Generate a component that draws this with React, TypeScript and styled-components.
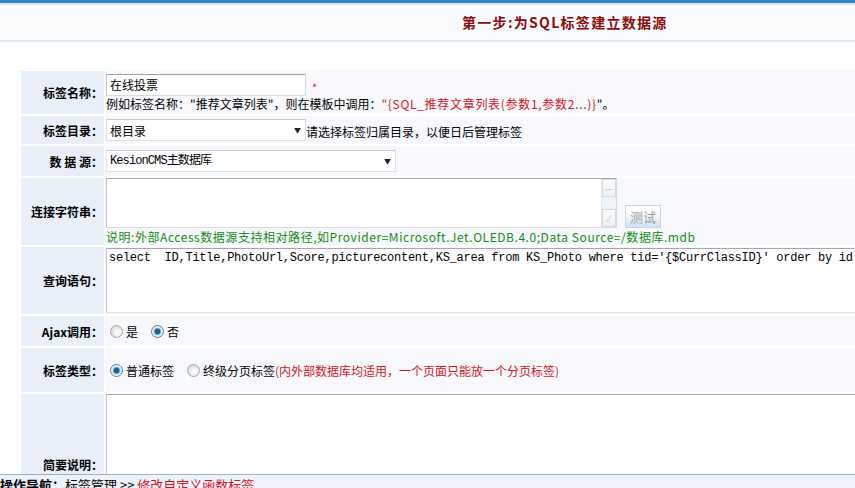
import React from 'react';
import styled, { createGlobalStyle } from 'styled-components';

const GlobalStyle = createGlobalStyle`
  html, body {
    margin: 0;
    padding: 0;
    background: #fff;
    overflow: hidden;
  }
  body {
    font-family: "Noto Sans CJK SC", "Liberation Sans", sans-serif;
    font-size: 12px;
    color: #000;
  }
`;

const Header = styled.div`
  height: 37px;
  border-top: 3px solid #2f84c8;
  box-shadow: inset 0 2px 0 #d4eaf8;
  background: #fafcfe;
  border-bottom: 2px solid #dfe7ef;
  display: flex;
  align-items: center;
  padding-left: 462px;
`;

const Title = styled.h1`
  margin: 0;
  font-size: 14px;
  font-weight: bold;
  letter-spacing: 1.3px;
  color: #8c0a0a;
`;

const Form = styled.div`
  margin: 29px 0 0 21px;
  width: 1100px;
  display: flex;
  flex-direction: column;
  gap: 2px;
`;

const Row = styled.div<{ $h: number }>`
  display: grid;
  grid-template-columns: 83px 1fr;
  column-gap: 1px;
  height: ${({ $h }) => $h}px;
`;

const Label = styled.div`
  background: #e8eff9;
  display: flex;
  align-items: center;
  justify-content: flex-end;
  font-weight: bold;
  font-size: 12px;
  padding-right: 1px;
  white-space: nowrap;
`;

const Cell = styled.div<{ $dir?: 'row' | 'column'; $top?: boolean }>`
  background: #f7f9fd;
  display: flex;
  flex-direction: ${({ $dir }) => $dir || 'column'};
  justify-content: ${({ $dir, $top }) => ($dir === 'row' || $top ? 'flex-start' : 'center')};
  align-items: ${({ $dir }) => ($dir === 'row' ? 'center' : 'flex-start')};
  padding-left: 1px;
  white-space: nowrap;
`;

const Line = styled.div<{ $align?: string }>`
  display: flex;
  align-items: ${({ $align }) => $align || 'center'};
`;

const TextInput = styled.input`
  box-sizing: border-box;
  width: 200px;
  height: 22px;
  border: 1px solid #d6d9dd;
  border-top-color: #9aa0a7;
  border-left-color: #c2c6cb;
  background: #fff;
  padding: 0 3px;
  font: 12px "Noto Sans CJK SC", sans-serif;
  outline: none;
`;

const Star = styled.span`
  color: #e0202a;
  font-size: 11px;
  margin-left: 6px;
  margin-top: 4px;
`;

const Hint = styled.div`
  line-height: 16px;
  color: #000;
`;

const Red = styled.span<{ $wide?: boolean }>`
  color: #d4141c;
  letter-spacing: ${({ $wide }) => ($wide ? '0.7px' : '0')};
`;

const Green = styled.div`
  color: #178a17;
  line-height: 16px;
  margin-top: 1px;
  letter-spacing: 0.55px;
`;

const SelectWrap = styled.div<{ $w: number }>`
  position: relative;
  width: ${({ $w }) => $w}px;
  height: 22px;
  &::after {
    content: '▼';
    position: absolute;
    right: 5px;
    top: 6px;
    font-size: 7px;
    color: #222;
    pointer-events: none;
  }
`;

const Select = styled.select<{ $mono?: boolean }>`
  appearance: none;
  box-sizing: border-box;
  width: 100%;
  height: 100%;
  border: 1px solid #dde0e4;
  border-top-color: #c5cad0;
  background: #fff;
  padding: 0 3px;
  font-size: 12px;
  font-family: ${({ $mono }) =>
    $mono ? '"Liberation Mono", "Noto Sans CJK SC", monospace' : '"Noto Sans CJK SC", sans-serif'};
  letter-spacing: ${({ $mono }) => ($mono ? '-0.9px' : '0')};
  color: #000;
  outline: none;
`;

const SideNote = styled.span`
  line-height: 16px;
  margin-bottom: 1px;
`;

const AreaBox = styled.div`
  display: flex;
  box-sizing: border-box;
  width: 511px;
  height: 50px;
  border: 1px solid #d8dbdf;
  border-top-color: #a4a9af;
  border-left-color: #bfc3c8;
  background: #fff;
`;

const PlainArea = styled.textarea`
  flex: 1;
  border: none;
  resize: none;
  outline: none;
  background: transparent;
`;

const ScrollBar = styled.div`
  width: 14px;
  display: flex;
  flex-direction: column;
  justify-content: space-between;
  background: #eef3f8;
  border-left: 1px solid #e4e8ec;
`;

const ScrollBtn = styled.div`
  height: 16px;
  border: 1px solid #d2d9e0;
  background: linear-gradient(#fbfcfd, #edf1f5);
  display: flex;
  align-items: center;
  justify-content: center;
  color: #b8bfc6;
  font-size: 9px;
  line-height: 1;
`;

const TestButton = styled.button`
  box-sizing: border-box;
  width: 36px;
  height: 23px;
  margin-left: 8px;
  border: 1px solid #c9d6e2;
  background: linear-gradient(#fdfeff 30%, #cfe2f3);
  color: #a0a0a0;
  font: 13px "Noto Sans CJK SC", sans-serif;
  padding: 0;
`;

const CodeArea = styled.textarea<{ $h: number }>`
  box-sizing: border-box;
  width: 760px;
  height: ${({ $h }) => $h}px;
  border: 1px solid #dcdfe3;
  border-top-color: #a3a8ae;
  border-left-color: #c4c8cd;
  background: #fff;
  resize: none;
  outline: none;
  padding: 2px 2px;
  font: 12px "Liberation Mono", "Noto Sans CJK SC", monospace;
  letter-spacing: -0.25px;
  color: #000;
  overflow: hidden;
`;

const RadioGroup = styled.label`
  display: inline-flex;
  align-items: center;
  gap: 3px;
  margin-left: 4px;
  margin-right: 9px;
`;

const RadioDot = styled.span<{ $on?: boolean }>`
  box-sizing: border-box;
  width: 13px;
  height: 13px;
  border-radius: 50%;
  border: 1px solid ${({ $on }) => ($on ? '#5d7f98' : '#9fa8b1')};
  background: ${({ $on }) =>
    $on
      ? 'radial-gradient(circle, #1d5f8e 0 2.5px, #5c9cc7 3px, #dde9f2 4px, #f5f8fb 6px)'
      : 'radial-gradient(circle at 60% 60%, #fafafa 0 2px, #dcdfe2 6px)'};
`;

const Footer = styled.div`
  position: fixed;
  left: 0;
  right: 0;
  bottom: 0;
  height: 13px;
  overflow: hidden;
  border-top: 1px solid #98b4c8;
  background: #eef3fa;
  font-size: 13px;
  line-height: 20px;
  white-space: nowrap;
`;

const Bold = styled.b`
  font-weight: bold;
`;

function Radio({ on, text }: { on?: boolean; text: string }) {
  return (
    <RadioGroup>
      <RadioDot $on={on} />
      <span>{text}</span>
    </RadioGroup>
  );
}

const query =
  "select  ID,Title,PhotoUrl,Score,picturecontent,KS_area from KS_Photo where tid='{$CurrClassID}' order by id";

export default function App(): JSX.Element {
  return (
    <>
      <GlobalStyle />
      <Header>
        <Title>第一步:为SQL标签建立数据源</Title>
      </Header>
      <Form>
        <Row $h={43}>
          <Label>标签名称：</Label>
          <Cell>
            <Line>
              <TextInput defaultValue="在线投票" />
              <Star>*</Star>
            </Line>
            <Hint>
              例如标签名称："推荐文章列表"，则在模板中调用：
              <Red $wide>"{'{SQL_推荐文章列表(参数1,参数2...)}'}</Red>"。
            </Hint>
          </Cell>
        </Row>
        <Row $h={28}>
          <Label>标签目录：</Label>
          <Cell $dir="row">
            <Line $align="flex-end">
              <SelectWrap $w={200}>
                <Select defaultValue="0">
                  <option value="0">根目录</option>
                </Select>
              </SelectWrap>
              <SideNote>请选择标签归属目录，以便日后管理标签</SideNote>
            </Line>
          </Cell>
        </Row>
        <Row $h={30}>
          <Label>数 据 源：</Label>
          <Cell>
            <SelectWrap $w={290}>
              <Select $mono defaultValue="0">
                <option value="0">KesionCMS主数据库</option>
              </Select>
            </SelectWrap>
          </Cell>
        </Row>
        <Row $h={67}>
          <Label>连接字符串：</Label>
          <Cell>
            <Line $align="flex-end">
              <AreaBox>
                <PlainArea />
                <ScrollBar>
                  <ScrollBtn>—</ScrollBtn>
                  <ScrollBtn>⁄</ScrollBtn>
                </ScrollBar>
              </AreaBox>
              <TestButton disabled>测试</TestButton>
            </Line>
            <Green>
              说明:外部Access数据源支持相对路径,如Provider=Microsoft.Jet.OLEDB.4.0;Data Source=/数据库.mdb
            </Green>
          </Cell>
        </Row>
        <Row $h={67}>
          <Label>查询语句：</Label>
          <Cell>
            <CodeArea $h={65} defaultValue={query} />
          </Cell>
        </Row>
        <Row $h={30}>
          <Label>Ajax调用：</Label>
          <Cell $dir="row">
            <Radio text="是" />
            <Radio on text="否" />
          </Cell>
        </Row>
        <Row $h={44}>
          <Label>标签类型：</Label>
          <Cell $dir="row">
            <Radio on text="普通标签" />
            <RadioGroup>
              <RadioDot />
              <span>
                终级分页标签<Red>(内外部数据库均适用，一个页面只能放一个分页标签)</Red>
              </span>
            </RadioGroup>
          </Cell>
        </Row>
        <Row $h={140}>
          <Label>简要说明：</Label>
          <Cell $top>
            <CodeArea $h={130} />
          </Cell>
        </Row>
      </Form>
      <Footer>
        <Bold>操作导航：</Bold>标签管理 &gt;&gt; <Red>修改自定义函数标签</Red>
      </Footer>
    </>
  );
}
